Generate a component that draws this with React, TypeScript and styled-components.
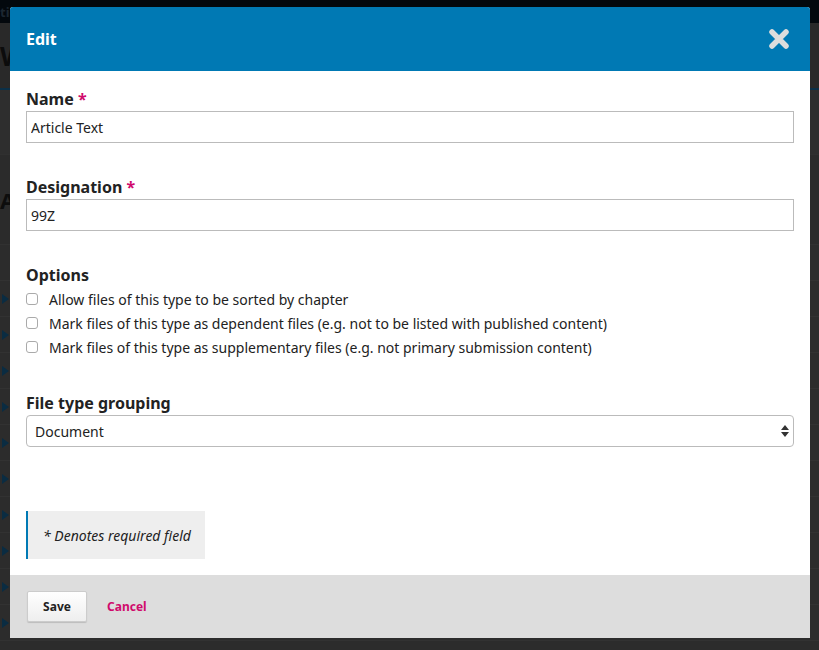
import React from "react";
import styled, { createGlobalStyle } from "styled-components";

const Global = createGlobalStyle`
  html, body { margin: 0; padding: 0; background: #2b2b2b; }
  body { font-family: "Noto Sans", "Open Sans", sans-serif; color: #222; }
  * { box-sizing: border-box; }
`;

const Page = styled.div`
  position: relative;
  width: 819px;
  height: 650px;
  overflow: hidden;
  background: #2c2c2c;
`;

const TopBar = styled.div`
  height: 23px;
  background: #03080d;
  display: flex;
  justify-content: space-between;
  align-items: center;
  padding: 0 10px 0 0;
  color: #1c2630;
  font-size: 13px;
  font-weight: 700;
`;

const PageHead = styled.div`
  height: 67px;
  border-bottom: 2px solid #0b3048;
  background: #292929;
  display: flex;
  align-items: center;
  font-size: 26px;
  font-weight: 700;
  color: #0c0c0c;
`;

const PageSub = styled.div`
  height: 65px;
  background: #2e2e2e;
  border-bottom: 1px solid #303030;
`;

const PageSection = styled.div`
  height: 90px;
  background: #2b2b2b;
  display: flex;
  align-items: center;
  font-size: 22px;
  font-weight: 700;
  color: #0d0d0d;
  border-bottom: 1px solid #313131;
`;

const BgRow = styled.div`
  height: 36px;
  border-bottom: 1px solid #323232;
  display: flex;
  align-items: center;
`;

const Overlay = styled.div`
  position: absolute;
  left: 10px;
  top: 7px;
  width: 800px;
  height: 631px;
  background: #fff;
  display: flex;
  flex-direction: column;
  border-radius: 3px 3px 0 0;
  overflow: hidden;
`;

const Header = styled.div`
  height: 64px;
  flex: none;
  background: #0079b4;
  display: flex;
  align-items: center;
  justify-content: space-between;
  padding: 0 20px 0 16px;
`;

const Title = styled.h1`
  margin: 0;
  color: #fff;
  font-size: 16px;
  font-weight: 700;
  line-height: 20px;
`;

const Close = styled.button`
  border: 0;
  background: none;
  padding: 0;
  width: 22px;
  height: 22px;
  display: flex;
  cursor: pointer;
`;

const Body = styled.div`
  flex: 1;
  min-height: 0;
  padding: 18px 16px 0;
  display: flex;
  flex-direction: column;
`;

const Group = styled.div<{ $gap?: number }>`
  display: flex;
  flex-direction: column;
  margin-bottom: ${(p) => p.$gap ?? 34}px;
`;

const Label = styled.label`
  font-size: 16px;
  font-weight: 700;
  line-height: 20px;
  color: #222;
  margin-bottom: 2px;
`;

const Req = styled.span`
  color: #d00a6c;
`;

const Input = styled.input`
  height: 32px;
  width: 100%;
  border: 1px solid #bbb;
  border-radius: 0;
  padding: 0 4px;
  font-family: "Noto Sans", sans-serif;
  font-size: 14px;
  color: #222;
  outline: none;
`;

const CheckRow = styled.label`
  display: flex;
  align-items: center;
  height: 24px;
  font-size: 14px;
  color: #222;
`;

const Check = styled.input`
  appearance: none;
  width: 12px;
  height: 12px;
  border: 1px solid #aaa;
  border-radius: 3px;
  margin: 0 11px 0 0;
  background: #fff;
`;

const SelectWrap = styled.div`
  position: relative;
  width: 100%;
`;

const Select = styled.select`
  appearance: none;
  width: 100%;
  height: 32px;
  border: 1px solid #bbb;
  border-radius: 4px;
  background: #fff;
  padding: 0 8px;
  font-family: "Noto Sans", sans-serif;
  font-size: 14px;
  color: #222;
`;

const SelectArrow = styled.svg`
  position: absolute;
  right: 5px;
  top: 10px;
  pointer-events: none;
`;

const Note = styled.div`
  align-self: flex-start;
  margin-top: 64px;
  width: 179px;
  height: 48px;
  flex: none;
  background: #eee;
  border-left: 2px solid #0079b4;
  display: flex;
  align-items: center;
  padding-left: 15px;
  font-size: 14px;
  font-style: italic;
  color: #222;
`;

const Footer = styled.div`
  height: 63px;
  flex: none;
  background: #ddd;
  display: flex;
  align-items: center;
  padding: 0 16px 0 17px;
  gap: 20px;
`;

const SaveBtn = styled.button`
  width: 60px;
  height: 31px;
  border: 1px solid #ccc;
  border-radius: 2px;
  background: linear-gradient(#fff, #eee);
  box-shadow: 0 1px 1px rgba(0, 0, 0, 0.15);
  font-family: "Noto Sans", sans-serif;
  font-size: 12px;
  font-weight: 700;
  color: #222;
`;

const CancelBtn = styled.button`
  border: 0;
  background: none;
  padding: 0;
  font-family: "Noto Sans", sans-serif;
  font-size: 12px;
  font-weight: 700;
  color: #d00a6c;
`;

const Tri = styled.span<{ $down?: boolean }>`
  display: inline-block;
  width: 0;
  height: 0;
  border-style: solid;
  ${(p) =>
    p.$down
      ? "border-width: 6px 5px 0 5px; border-color: #0a2c42 transparent transparent transparent; margin-left: 14px;"
      : "border-width: 5px 0 5px 7px; border-color: transparent transparent transparent #0a2c42; margin-left: 2px;"}
`;

export default function App() {
  const rows = Array.from({ length: 10 });
  return (
    <Page>
      <Global />
      <TopBar>
        <span>tion ▾</span>
        <span>⚲ English</span>
      </TopBar>
      <PageHead>W</PageHead>
      <PageSub />
      <PageSection>A</PageSection>
      <BgRow>
        <Tri $down />
      </BgRow>
      {rows.map((_, i) => (
        <BgRow key={i}>
          <Tri />
        </BgRow>
      ))}
      <Overlay>
        <Header>
          <Title>Edit</Title>
          <Close aria-label="Close">
            <svg width="22" height="22" viewBox="0 0 22 22">
              <path
                d="M4 4 L18 18 M18 4 L4 18"
                stroke="#ddd"
                strokeWidth="5.5"
                strokeLinecap="round"
              />
            </svg>
          </Close>
        </Header>
        <Body>
          <Group>
            <Label>
              Name <Req>*</Req>
            </Label>
            <Input defaultValue="Article Text" />
          </Group>
          <Group>
            <Label>
              Designation <Req>*</Req>
            </Label>
            <Input defaultValue="99Z" />
          </Group>
          <Group $gap={34}>
            <Label>Options</Label>
            <CheckRow>
              <Check type="checkbox" />
              Allow files of this type to be sorted by chapter
            </CheckRow>
            <CheckRow>
              <Check type="checkbox" />
              Mark files of this type as dependent files (e.g. not to be listed with published content)
            </CheckRow>
            <CheckRow>
              <Check type="checkbox" />
              Mark files of this type as supplementary files (e.g. not primary submission content)
            </CheckRow>
          </Group>
          <Group $gap={0}>
            <Label>File type grouping</Label>
            <SelectWrap>
              <Select defaultValue="Document">
                <option>Document</option>
                <option>Artwork</option>
                <option>Supplementary</option>
              </Select>
              <SelectArrow width="8" height="12" viewBox="0 0 8 12">
                <path d="M4 0 L8 5 L0 5 Z M0 7 L8 7 L4 12 Z" fill="#333" />
              </SelectArrow>
            </SelectWrap>
          </Group>
          <Note>* Denotes required field</Note>
        </Body>
        <Footer>
          <SaveBtn>Save</SaveBtn>
          <CancelBtn>Cancel</CancelBtn>
        </Footer>
      </Overlay>
    </Page>
  );
}
